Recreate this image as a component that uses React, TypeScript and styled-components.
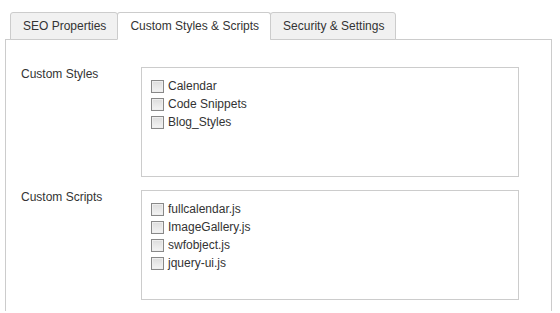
import styled, { createGlobalStyle } from "styled-components";

const GlobalStyle = createGlobalStyle`
  body {
    margin: 0;
    background: #fff;
    font-family: "Liberation Sans", Arial, sans-serif;
    font-size: 12px;
    color: #333;
  }
`;

const Wrapper = styled.div`
  padding: 12px 8px 0 5px;
`;

const TabList = styled.div`
  display: flex;
  padding-left: 5px;
  margin-bottom: -1px;
  position: relative;
  z-index: 1;
`;

const Tab = styled.div<{ $active?: boolean }>`
  height: 26px;
  line-height: 27px;
  padding: 0 11px 0 12px;
  border: 1px solid #ccc;
  border-bottom-color: ${(p) => (p.$active ? "#fff" : "#ccc")};
  border-radius: 3px 3px 0 0;
  background: ${(p) => (p.$active ? "#fff" : "#f1f1f1")};
  margin-right: -1px;
  color: #333;
  white-space: nowrap;
`;

const Panel = styled.div`
  border: 1px solid #ccc;
  border-bottom: none;
  height: 272px;
  padding: 27px 0 0 15px;
  box-sizing: border-box;
`;

const Row = styled.div`
  display: grid;
  grid-template-columns: 120px 378px;
  margin-bottom: 13px;
`;

const Label = styled.div`
  line-height: 14px;
`;

const Box = styled.div`
  box-sizing: border-box;
  border: 1px solid #ccc;
  height: 110px;
  padding: 9px 9px 0;
`;

const Item = styled.label`
  display: flex;
  align-items: center;
  height: 18px;
  gap: 4px;
`;

const Check = styled.span`
  width: 11px;
  height: 11px;
  border: 1px solid #888;
  background: linear-gradient(#dcdcdc, #f4f4f4);
  box-shadow: inset 0 0 0 1px #eee;
`;

const sections = [
  { label: "Custom Styles", items: ["Calendar", "Code Snippets", "Blog_Styles"] },
  {
    label: "Custom Scripts",
    items: ["fullcalendar.js", "ImageGallery.js", "swfobject.js", "jquery-ui.js"],
  },
];

export default function App() {
  return (
    <Wrapper>
      <GlobalStyle />
      <TabList>
        <Tab>SEO Properties</Tab>
        <Tab $active>Custom Styles &amp; Scripts</Tab>
        <Tab>Security &amp; Settings</Tab>
      </TabList>
      <Panel>
        {sections.map((s) => (
          <Row key={s.label}>
            <Label>{s.label}</Label>
            <Box>
              {s.items.map((it) => (
                <Item key={it}>
                  <Check />
                  {it}
                </Item>
              ))}
            </Box>
          </Row>
        ))}
      </Panel>
    </Wrapper>
  );
}
